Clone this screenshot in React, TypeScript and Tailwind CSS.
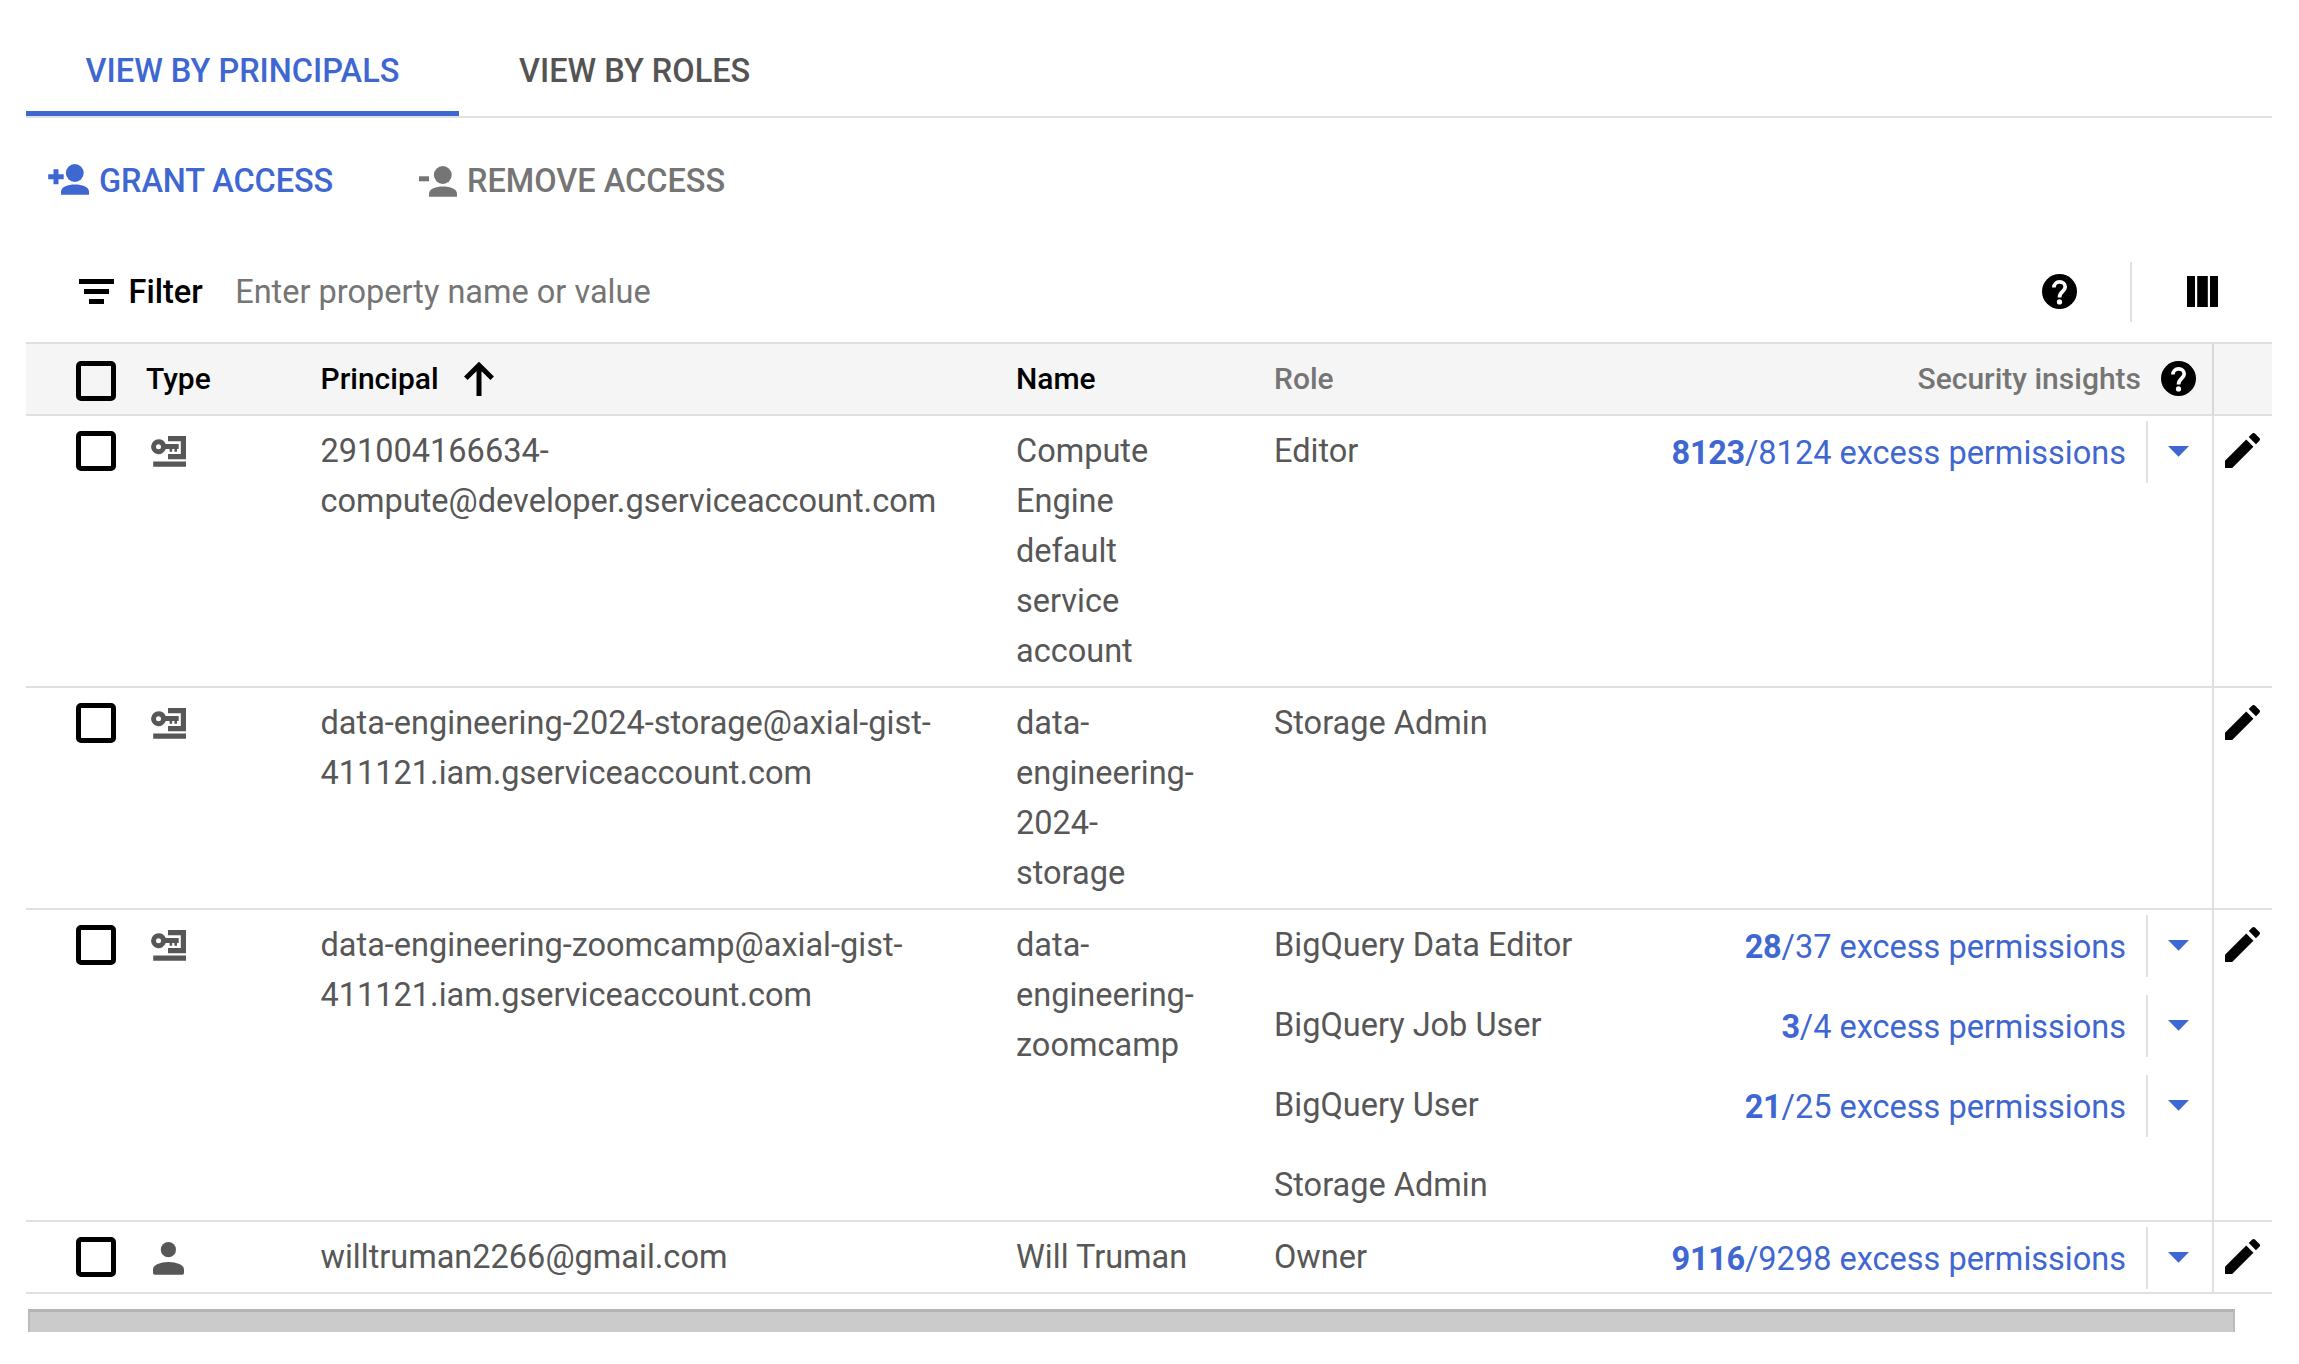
import React from "react";

type Insight = { excess: number; total: number };
type RoleEntry = { role: string; insight?: Insight };
type Principal = {
  kind: "service" | "user";
  principal: string[];
  name: string[];
  roles: RoleEntry[];
};

const principals: Principal[] = [
  {
    kind: "service",
    principal: ["291004166634-", "compute@developer.gserviceaccount.com"],
    name: ["Compute", "Engine", "default", "service", "account"],
    roles: [{ role: "Editor", insight: { excess: 8123, total: 8124 } }],
  },
  {
    kind: "service",
    principal: ["data-engineering-2024-storage@axial-gist-", "411121.iam.gserviceaccount.com"],
    name: ["data-", "engineering-", "2024-", "storage"],
    roles: [{ role: "Storage Admin" }],
  },
  {
    kind: "service",
    principal: ["data-engineering-zoomcamp@axial-gist-", "411121.iam.gserviceaccount.com"],
    name: ["data-", "engineering-", "zoomcamp"],
    roles: [
      { role: "BigQuery Data Editor", insight: { excess: 28, total: 37 } },
      { role: "BigQuery Job User", insight: { excess: 3, total: 4 } },
      { role: "BigQuery User", insight: { excess: 21, total: 25 } },
      { role: "Storage Admin" },
    ],
  },
  {
    kind: "user",
    principal: ["willtruman2266@gmail.com"],
    name: ["Will Truman"],
    roles: [{ role: "Owner", insight: { excess: 9116, total: 9298 } }],
  },
];

function AddPersonIcon() {
  return (
    <svg className="h-[31px] w-[41px] shrink-0" viewBox="0 0 41 31" fill="currentColor">
      <path d="M5.500 5.300h5v5h5.200v5h-5.200v5h-5v-5H.2v-5h5.300z" />
      <circle cx="26.800" cy="9" r="8.900" />
      <path d="M13 30.700v-3.200c0-4.600 7-7 14-7s14 2.400 14 7v3.200z" />
    </svg>
  );
}

function RemovePersonIcon() {
  return (
    <svg className="h-[31px] w-[38px] shrink-0" viewBox="0 0 38 31" fill="currentColor">
      <path d="M0 10.300h10v5H0z" />
      <circle cx="23.800" cy="9" r="8.900" />
      <path d="M10 30.700v-3.200c0-4.600 7-7 14-7s14 2.400 14 7v3.200z" />
    </svg>
  );
}

function FilterIcon() {
  return (
    <svg className="h-[25px] w-[35px] shrink-0" viewBox="0 0 35 25" fill="currentColor">
      <path d="M0 0h35v5H0zM5 10h25v5H5zM10 20h15v5H10z" />
    </svg>
  );
}

function HelpIcon() {
  return (
    <svg className="size-[35px] shrink-0" viewBox="0 0 35 35">
      <circle cx="17.500" cy="17.500" r="17.500" fill="black" />
      <path
        d="M11.900 13.600c0-3.300 2.500-5.700 5.700-5.700s5.600 2.200 5.600 5.100c0 4.300-5.700 4.700-5.700 10.400"
        fill="none"
        stroke="white"
        strokeWidth="3.700"
      />
      <circle cx="17.500" cy="27.900" r="2.600" fill="white" />
    </svg>
  );
}

function ColumnsIcon() {
  return (
    <svg className="size-[31px] shrink-0" viewBox="0 0 31 31" fill="currentColor">
      <path d="M0 0h8v31H0zM10.200 0h10.600v31H10.200zM23 0h8v31h-8z" />
    </svg>
  );
}

function SortArrowIcon() {
  return (
    <svg className="h-[34px] w-[30px] shrink-0" viewBox="0 0 30 34" fill="none" stroke="currentColor" strokeWidth="5">
      <path d="M15 34V4M1.800 16.200 15 3.200l13.200 13" />
    </svg>
  );
}

function ServiceAccountIcon() {
  return (
    <svg className="h-[31px] w-[35px]" viewBox="0 0 35 31" fill="currentColor">
      <path d="M17 0h18v23.200H17v-5.300h12.800V5.300H17z" />
      <path
        fillRule="evenodd"
        d="M7.500 3.200a7.500 7.500 0 0 1 7.200 4.900h13v5H26v2.600h-2.600v-2.600h-2.200v2.600h-2.600v-2.600h-3.900A7.500 7.500 0 1 1 7.500 3.200zm0 5a2.500 2.500 0 1 0 0 5 2.500 2.500 0 0 0 0-5z"
      />
      <path d="M2.200 25.400H35v5.300H2.200z" />
    </svg>
  );
}

function UserIcon() {
  return (
    <svg className="h-[33px] w-[31px]" viewBox="0 0 31 33" fill="currentColor">
      <circle cx="15.400" cy="7.700" r="7.600" />
      <path d="M0 27.600c0-4.700 7.500-7.500 15.500-7.500S31 22.900 31 27.600v3.200c0 1.200-.7 2-1.800 2H1.800C.7 32.800 0 32 0 30.800z" />
    </svg>
  );
}

function EditIcon() {
  return (
    <svg className="size-[45px]" viewBox="0 0 18 18" fill="black">
      <path d="M2 13.120l8.490-8.488 2.878 2.878L4.878 16H2v-2.880zm13.776-8.017L14.370 6.507 11.493 3.630l1.404-1.406a.764.764 0 0 1 1.080 0l1.799 1.800a.764.764 0 0 1 0 1.079z" />
    </svg>
  );
}

function Checkbox() {
  return <div className="size-10 rounded-[5px] border-5 border-black" />;
}

function Lines({ items }: { items: string[] }) {
  return (
    <>
      {items.map((line) => (
        <div key={line} className="whitespace-nowrap">
          {line}
        </div>
      ))}
    </>
  );
}

const rowGrid = "grid grid-cols-[120px_174.5px_695.5px_258px_356px_582px_1fr]";

function InsightLink({ excess, total }: Insight) {
  return (
    <div className="-mt-[5px] flex h-[62px] items-start justify-end text-[#3f67d2]">
      <div className="mr-5 pt-[7px] whitespace-nowrap">
        <span className="font-bold tracking-[-0.3px]">{excess}</span>/{total} excess permissions
      </div>
      <div className="flex h-[62px] w-[66px] border-l-2 border-[#e0e0e0] pt-[25px] pl-5">
        <svg className="h-[11px] w-[21px]" viewBox="0 0 21 11" fill="currentColor">
          <path d="M0 0h21L10.500 10.800z" />
        </svg>
      </div>
    </div>
  );
}

function PrincipalRow({ item }: { item: Principal }) {
  return (
    <div className={`${rowGrid} border-b-2 border-[#e0e0e0]`}>
      <div className="pt-[15px] pl-[50px]">
        <Checkbox />
      </div>
      {item.kind === "service" ? (
        <div className="pt-5 pl-[5px]">
          <ServiceAccountIcon />
        </div>
      ) : (
        <div className="pt-5 pl-[7px]">
          <UserIcon />
        </div>
      )}
      <div className="py-2.5">
        <Lines items={item.principal} />
      </div>
      <div className="py-2.5">
        <Lines items={item.name} />
      </div>
      <div className="col-span-2 flex flex-col gap-[30px] py-2.5">
        {item.roles.map((entry) => (
          <div key={entry.role} className="grid h-[50px] grid-cols-[356px_582px]">
            <div className="whitespace-nowrap">{entry.role}</div>
            {entry.insight && <InsightLink {...entry.insight} />}
          </div>
        ))}
      </div>
      <div className="border-l-2 border-[#e0e0e0] pt-3 pl-1.5">
        <EditIcon />
      </div>
    </div>
  );
}

export default function App() {
  return (
    <div className="min-h-[1364px] w-[2299px] bg-white pr-[27px] pl-[26px] font-[Roboto,sans-serif] text-[32.5px] leading-[50px] text-[#575757]">
      <div className="flex h-[118px] items-end border-b-2 border-[#e0e0e0] font-medium">
        <div className="w-[433px] border-b-5 border-[#3f67d2] pb-[15px] text-center whitespace-nowrap text-[#3f67d2]">
          VIEW BY PRINCIPALS
        </div>
        <div className="px-[60px] pb-5 whitespace-nowrap text-[#545454]">VIEW BY ROLES</div>
      </div>

      <div className="flex h-[124px] items-start pt-[38px] pl-[22px] font-medium">
        <div className="flex w-[371px] text-[#3f67d2]">
          <div className="pt-2">
            <AddPersonIcon />
          </div>
          <div className="ml-[10px] tracking-[-0.1px] whitespace-nowrap">GRANT ACCESS</div>
        </div>
        <div className="flex text-[#757575]">
          <div className="pt-2.5">
            <RemovePersonIcon />
          </div>
          <div className="ml-[10px] whitespace-nowrap">REMOVE ACCESS</div>
        </div>
      </div>

      <div className="flex h-[100px] items-center pr-[54px] pl-[53px] text-black">
        <div className="-mt-0.5">
          <FilterIcon />
        </div>
        <div className="ml-[14.5px] font-medium">Filter</div>
        <div className="ml-[32.5px] flex-1 text-[#757575]">Enter property name or value</div>
        <div className="-mt-0.5">
          <HelpIcon />
        </div>
        <div className="ml-[53px] h-[60px] w-0.5 bg-[#e0e0e0]" />
        <div className="-mt-0.5 ml-[55px]">
          <ColumnsIcon />
        </div>
      </div>

      <div className={`${rowGrid} h-[74px] border-y-2 border-[#e0e0e0] bg-[#f5f5f5] text-[30px] font-medium text-black`}>
        <div className="pt-[17px] pl-[50px]">
          <Checkbox />
        </div>
        <div className="pt-2.5">Type</div>
        <div className="flex pt-2.5">
          Principal
          <div className="ml-[25px] pt-2">
            <SortArrowIcon />
          </div>
        </div>
        <div className="pt-2.5">Name</div>
        <div className="pt-2.5 text-[#757575]">Role</div>
        <div className="flex justify-end pt-2.5 pr-4 text-[#757575]">
          Security insights
          <div className="ml-5 pt-[7px]">
            <HelpIcon />
          </div>
        </div>
        <div className="border-l-2 border-[#d8d8d8]" />
      </div>

      {principals.map((item) => (
        <PrincipalRow key={item.principal.join("")} item={item} />
      ))}

      <div className="mt-[15px] ml-0.5 h-[23px] w-[2207px] border-x-2 border-t-3 border-x-[#bcbcbc] border-t-[#b5b5b5] bg-[#cbcbcb]" />
    </div>
  );
}
